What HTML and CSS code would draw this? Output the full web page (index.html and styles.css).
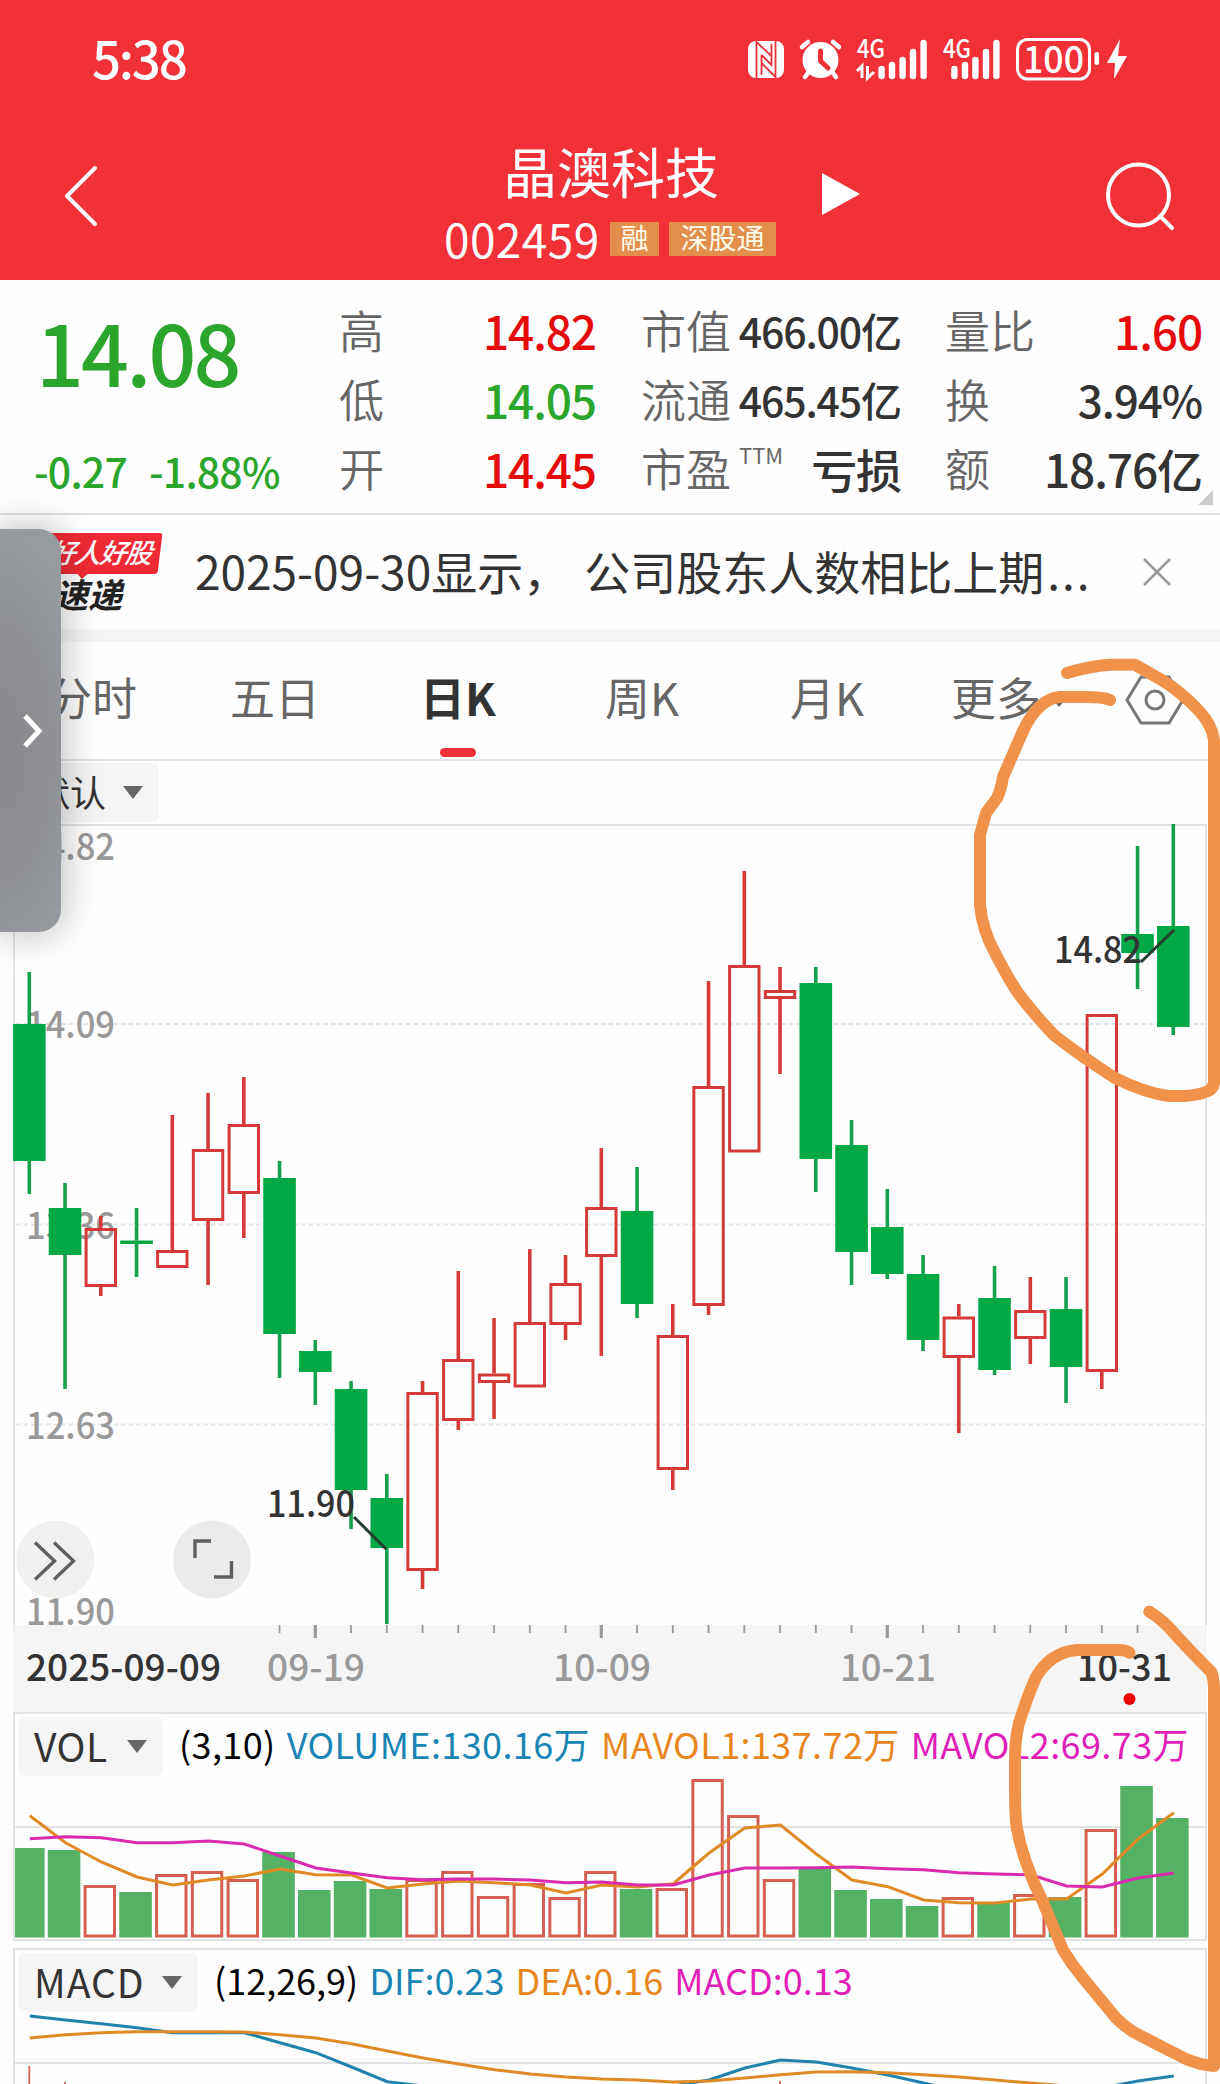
FILE: index.html
```html
<!DOCTYPE html>
<html lang="zh-CN">
<head>
    <meta charset="UTF-8">
    <meta name="viewport" content="width=device-width, initial-scale=1.0">
    <title>晶澳科技 002459</title>
    <link rel="stylesheet" href="styles.css">
</head>
<body>
    <header class="top">
        <div class="status-bar">
            <span class="clock">5:38</span>
            <svg class="status-icons" width="382" height="68" viewBox="747 20 382 68">
                <rect x="748" y="41" width="36" height="37" rx="8" fill="#fff"/>
                <path d="M757.500 76V43L771 56V64L761 54V76Z" fill="#fff"/>
                <path d="M756.500 78V42L771.500 56M775.500 41V77L761.500 63M761.500 55L771.500 65V44M761.500 55V75" fill="none" stroke="#f23038" stroke-width="1.8"/>
                <circle cx="820.500" cy="60" r="18" fill="#fff"/>
                <path d="M802 47L808 42M839 47L833 42M808 73L805 77M833 73L836 77" stroke="#fff" stroke-width="4.500" stroke-linecap="round"/>
                <path d="M820.500 51V61L828 68" fill="none" stroke="#f23038" stroke-width="5" stroke-linecap="round" stroke-linejoin="round"/>
                <text x="857" y="58" class="net" textLength="28" lengthAdjust="spacingAndGlyphs">4G</text>
                <path d="M857 71L862 66V78M867.500 66V78L874 72" fill="none" stroke="#fff" stroke-width="3"/>
                <path d="M881.600 69V76M892 65V76M902.600 60V76M913 52V76M923.600 43V76" class="bars"/>
                <text x="943" y="58" class="net" textLength="28" lengthAdjust="spacingAndGlyphs">4G</text>
                <path d="M954.400 69V76M965 65V76M975.400 60V76M986 52V76M996.400 43V76" class="bars"/>
                <rect x="1017.500" y="39.500" width="72" height="39.500" rx="10" fill="none" stroke="#fff" stroke-width="3"/>
                <text x="1023" y="73" class="battery" textLength="61" lengthAdjust="spacingAndGlyphs">100</text>
                <rect x="1094.500" y="52" width="4.500" height="13" rx="2" fill="#fff"/>
                <path d="M1120 39L1107 63H1115L1114 79L1127 56H1118Z" fill="#fff"/>
            </svg>
        </div>
        <div class="title-bar">
            <svg class="back" width="36" height="64" viewBox="0 0 36 64"><path d="M32 4L4 32L32 60"/></svg>
            <div class="stock">
                <h1>晶澳科技</h1>
                <div class="code-row">
                    <span class="code">002459</span>
                    <span class="badge">融</span>
                    <span class="badge wide">深股通</span>
                </div>
            </div>
            <svg class="play" width="38" height="42" viewBox="0 0 38 42"><path d="M0 0L38 21L0 42Z"/></svg>
            <svg class="search" width="70" height="70" viewBox="0 0 70 70"><circle cx="33.500" cy="34" r="30.500"/><path d="M55 55L67 67"/></svg>
        </div>
    </header>

    <section class="quote">
        <div class="price">
            <div class="last">14.08</div>
            <div class="change"><span>-0.27</span><span>-1.88%</span></div>
        </div>
        <dl class="col">
            <div><dt>高</dt><dd class="up">14.82</dd></div>
            <div><dt>低</dt><dd class="down">14.05</dd></div>
            <div><dt>开</dt><dd class="up">14.45</dd></div>
        </dl>
        <dl class="col cap">
            <div><dt>市值</dt><dd>466.00亿</dd></div>
            <div><dt>流通</dt><dd>465.45亿</dd></div>
            <div><dt>市盈<sup>TTM</sup></dt><dd class="loss">亏损</dd></div>
        </dl>
        <dl class="col">
            <div><dt>量比</dt><dd class="up">1.60</dd></div>
            <div><dt>换</dt><dd class="turnover">3.94%</dd></div>
            <div><dt>额</dt><dd>18.76亿</dd></div>
        </dl>
        <i class="corner"></i>
    </section>

    <section class="news">
        <div class="news-logo">
            <span class="logo-top">好人好股</span>
            <span class="logo-bottom">速递</span>
        </div>
        <p>2025-09-30显示，<span>公司股东人数相比上期</span><span class="dots">...</span></p>
        <svg class="close" width="30" height="30" viewBox="0 0 30 30"><path d="M2 2L28 28M28 2L2 28"/></svg>
    </section>

    <nav class="tabs">
        <span>分时</span>
        <span>五日</span>
        <span class="active">日K</span>
        <span>周K</span>
        <span>月K</span>
        <span class="more">更多<i></i></span>
        <svg class="gear" width="60" height="54" viewBox="0 0 60 54"><path d="M2 27L16 4H44L58 27L44 50H16Z"/><circle cx="30" cy="27" r="9"/></svg>
    </nav>

    <div class="overlay-row">
        <span class="select">默认<i class="arrow"></i></span>
    </div>

    <svg class="price-chart" id="priceChart" width="1220" height="888" viewBox="0 824 1220 888"></svg>

    <section class="panel vol">
        <div class="indicator">
            <span class="select">VOL<i class="arrow"></i></span>
            <span class="params">(3,10)</span>
            <span class="blue">VOLUME:130.16万</span>
            <span class="orange">MAVOL1:137.72万</span>
            <span class="pink">MAVOL2:69.73万</span>
        </div>
        <svg id="volChart" width="1190" height="164" viewBox="15 1776 1190 164"></svg>
    </section>

    <section class="panel macd">
        <div class="indicator">
            <span class="select">MACD<i class="arrow"></i></span>
            <span class="params">(12,26,9)</span>
            <span class="blue">DIF:0.23</span>
            <span class="orange">DEA:0.16</span>
            <span class="pink">MACD:0.13</span>
        </div>
        <svg id="macdChart" width="1190" height="72" viewBox="15 2012 1190 72"></svg>
    </section>

    <aside class="drawer">
        <svg width="20" height="36" viewBox="0 0 20 36"><path d="M2 3L16 18L2 33"/></svg>
    </aside>

    <!-- hand drawn marks on top of everything -->
    <svg class="marks" width="1220" height="2084" viewBox="0 0 1220 2084">
        <path d="M1067 673Q1090 666 1110 664.700H1135L1160 679Q1182 692 1200 712Q1212 725 1214 740V1083Q1213 1089 1208 1091Q1200 1095 1185 1096H1169Q1145 1093 1115 1078Q1085 1059 1055 1036Q1038 1019 1018 993Q1008 978 995 953Q982 929 980 905V835L986 813L997 798Q1001 790 1003 777L1023 731Q1038 699 1060 697H1085Q1104 697 1110 700"/>
        <path d="M1149.300 1611.700Q1163 1620 1174 1633Q1190 1651 1211 1671.700Q1214 1678 1214 1690V2066Q1200 2065 1186 2059Q1160 2046 1133 2031.700Q1124 2026 1116 2018L1083 1978Q1072 1965 1063 1950Q1054 1928 1042 1900Q1023 1862 1016.600 1827Q1015 1815 1015 1790V1757Q1015 1740 1019 1723Q1028 1695 1036 1677Q1051 1652 1077 1650H1118Q1126 1650 1129.500 1652.700"/>
    </svg>

    <script>
        const STEP = 35.75, FIRST = 29.3;
        const GREEN = '#02a846', RED = '#d33a38';

        // [up, high, body top, body bottom, low]
        const candles = [
            [0, 972, 1024, 1161, 1194], [0, 1183, 1208, 1255, 1389], [1, 1216, 1228, 1287, 1296],
            [0, 1208, 1240.5, 1244, 1277], [1, 1115, 1250, 1268, 1268], [1, 1093, 1149, 1221, 1285],
            [1, 1077, 1124, 1194, 1238], [0, 1161, 1178, 1334, 1378], [0, 1340, 1351, 1372, 1405],
            [0, 1381, 1389, 1490, 1529], [0, 1474, 1498, 1548, 1624], [1, 1381, 1392, 1571, 1589],
            [1, 1271, 1359, 1421, 1430], [1, 1318, 1373.5, 1383, 1419], [1, 1249, 1322, 1387.5, 1387],
            [1, 1255, 1283, 1325, 1340], [1, 1148, 1207, 1257, 1356], [0, 1167, 1211, 1304, 1318],
            [1, 1304, 1335, 1470, 1490], [1, 981, 1086, 1306, 1315], [1, 871, 965, 1152.5, 1152],
            [1, 967, 990, 999, 1074], [0, 967, 983, 1159, 1192], [0, 1120, 1145, 1252, 1285],
            [0, 1189, 1227, 1274, 1279], [0, 1255, 1274, 1340, 1351], [1, 1304, 1316.5, 1358, 1433],
            [0, 1266, 1298, 1370, 1375], [1, 1277, 1310, 1339, 1364], [0, 1277, 1309, 1367, 1403],
            [1, 1015, 1014, 1372, 1389], [0, 846, 934, 953, 989], [0, 824, 926, 1027, 1035]
        ];
        const volTop = [1848, 1850, 1885, 1892, 1874, 1871, 1879, 1852, 1890, 1881, 1889, 1879, 1871, 1896, 1883,
            1897, 1871, 1889, 1888, 1779, 1815, 1879, 1869, 1890, 1899, 1906, 1897, 1903, 1894, 1897, 1829, 1786, 1818];
        const mavol1 = [1815.7, 1842.7, 1862, 1877, 1885, 1880, 1876, 1869, 1874.7, 1875, 1888, 1884, 1881, 1882.7, 1885,
            1893, 1885, 1887, 1883.7, 1853, 1828, 1825, 1854, 1880, 1886.7, 1900, 1902.7, 1903, 1899, 1899, 1874, 1839, 1812.7];
        const mavol2 = [1838.7, 1836.7, 1837.7, 1842.7, 1842.7, 1841, 1844, 1856, 1868, 1873, 1877.7, 1879.7, 1879, 1879, 1880,
            1882.7, 1882, 1885, 1885, 1875, 1868, 1868, 1867.7, 1867, 1868.7, 1869.7, 1872.7, 1874, 1874.7, 1886, 1887, 1878, 1873];
        const dif = [2016, 2020, 2023.7, 2027.7, 2032.7, 2032.7, 2032.7, 2042.7, 2052.7, 2067, 2081.7, 2086, 2094, 2098, 2098,
            2098, 2096, 2092, 2086, 2080, 2068, 2060, 2062, 2068, 2075, 2083, 2091, 2094, 2096, 2094, 2088, 2081, 2076];
        const dea = [2038, 2034.7, 2032.7, 2031.7, 2031.7, 2031.7, 2032, 2034.7, 2038, 2043.7, 2051, 2058, 2064, 2069.7, 2074,
            2077, 2079, 2080, 2082, 2081, 2078, 2074.7, 2072, 2071.7, 2072.7, 2074.7, 2077, 2080, 2083, 2086, 2088, 2089, 2090];

        const cx = i => FIRST + i * STEP;

        function line(x1, y1, x2, y2, color, width, extra = '') {
            return `<path d="M${x1} ${y1}L${x2} ${y2}" stroke="${color}" stroke-width="${width}" ${extra}/>`;
        }

        function series(data, color) {
            const points = data.map((y, i) => `${cx(i) + 0.5},${y}`).join(' ');
            return `<polyline points="${points}" fill="none" stroke="${color}" stroke-width="3"/>`;
        }

        function label(text, x, baseline, width, cls) {
            return `<text x="${x}" y="${baseline}" class="${cls}" textLength="${width}" lengthAdjust="spacingAndGlyphs">${text}</text>`;
        }

        function drawPrice() {
            let s = '<rect x="13" y="1625" width="1194" height="87" fill="#f5f5f5"/>';
            s += '<path d="M14 1625V825H1206V1625" fill="none" stroke="#e3e3e3" stroke-width="2"/>';
            [1024, 1224.5, 1424.5].forEach(y => s += line(16, y, 1204, y, '#e3e3e3', 2, 'stroke-dasharray="4.500 3"'));
            [['14.82', 860], ['14.09', 1038], ['13.36', 1239], ['12.63', 1439], ['11.90', 1625]]
                .forEach(([t, y]) => s += label(t, 26, y, 89, 'axis'));

            candles.forEach(([up, high, top, bottom, low], i) => {
                const x = cx(i), color = up ? RED : GREEN, wick = up ? RED : '#14a04d';
                if (high < top) s += line(x, high, x, top, wick, 3.6);
                if (low > bottom) s += line(x, bottom, x, low, wick, 3.6);
                if (up) {
                    s += `<rect x="${x - 14.7}" y="${top + 1.5}" width="29.4" height="${bottom - top - 3}" fill="none" stroke="${RED}" stroke-width="3"/>`;
                } else {
                    s += `<rect x="${x - 16.3}" y="${top}" width="32.600" height="${bottom - top}" fill="${color}"/>`;
                }
            });

            s += label('11.90', 267, 1517, 88, 'note') + line(354, 1517, 386, 1549, '#263d30', 3);
            s += label('14.82', 1054, 963, 88, 'note') + line(1141, 962, 1174, 930, '#263d30', 3);

            // round chart buttons
            s += '<circle cx="55.300" cy="1559.500" r="39" fill="#f0f0ee"/><circle cx="212" cy="1559.500" r="39" fill="#ebebeb"/>';
            s += '<path d="M35 1542.500L54.500 1561L35 1579.500M54 1542.500L73.500 1561L54 1579.500M195 1558V1541H211M214 1577H231.500V1561" class="tool"/>';

            for (let i = 7; i < 32; i++) {
                const major = i % 8 === 0;
                s += line(cx(i), 1625, cx(i), major ? 1638 : 1633, '#999', major ? 3.2 : 1.8);
            }
            s += label('2025-09-09', 26, 1681, 195, 'date dark');
            s += label('09-19', 267, 1681, 98, 'date');
            s += label('10-09', 553, 1681, 98, 'date');
            s += label('10-21', 840, 1681, 96, 'date');
            s += label('10-31', 1077, 1681, 95, 'date dark');
            s += '<circle cx="1129.500" cy="1699" r="6" fill="#f00000"/>';
            document.getElementById('priceChart').innerHTML = s;
        }

        function drawVolume() {
            let s = line(15, 1827, 1205, 1827, '#e3e3e3', 2);
            volTop.forEach((y, i) => {
                const x = cx(i) - 1;
                if (candles[i][0]) {
                    s += `<rect x="${x - 14.7}" y="${y + 1.5}" width="29.4" height="${1937.5 - y - 3}" fill="none" stroke="#d45f52" stroke-width="3"/>`;
                } else {
                    s += `<rect x="${x - 16.3}" y="${y}" width="32.600" height="${1937.5 - y}" fill="#55b164"/>`;
                }
            });
            s += series(mavol1, '#e08a26') + series(mavol2, '#d92bb0');
            document.getElementById('volChart').innerHTML = s;
        }

        function drawMacd() {
            let s = line(15, 2063, 1205, 2063, '#e3e3e3', 2);
            s += line(cx(0), 2066, cx(0), 2084, '#d45f52', 1.8);
            s += line(cx(1), 2082, cx(1), 2084, '#d45f52', 1.8);
            s += line(cx(21), 2081, cx(21), 2084, '#d45f52', 1.8);
            s += series(dif, '#1f83ad') + series(dea, '#e08a26');
            document.getElementById('macdChart').innerHTML = s;
        }

        drawPrice();
        drawVolume();
        drawMacd();
    </script>
</body>
</html>
```
FILE: styles.css
```css
* {
    box-sizing: border-box;
}
body {
    position: relative;
    width: 1220px;
    height: 2084px;
    margin: 0;
    overflow: hidden;
    background: #fefefe;
    color: #333;
    font-family: "Noto Sans CJK SC", "Noto Sans", sans-serif;
}
h1, p, dl, dd {
    margin: 0;
}
svg {
    display: block;
}

/* header */
.top {
    height: 280px;
    background: #f23038;
    color: white;
}
.status-bar {
    display: flex;
    justify-content: space-between;
    height: 112px;
    padding: 20px 91px 0 92px;
}
.clock {
    margin-top: 11px;
    font-size: 51px;
    line-height: 52px;
    font-weight: 500;
    letter-spacing: -2.2px;
}
.net {
    fill: white;
    font-size: 25px;
    font-weight: 500;
}
.battery {
    fill: white;
    font-size: 37px;
    font-weight: 500;
}
.bars {
    stroke: white;
    stroke-width: 6.4;
    stroke-linecap: round;
}
.title-bar {
    display: grid;
    grid-template-columns: 430px 362px 313px 1fr;
    height: 168px;
}
.title-bar svg {
    fill: none;
    stroke: white;
    stroke-width: 4;
    stroke-linecap: round;
    stroke-linejoin: round;
}
.title-bar .back {
    margin: 52px 0 0 63px;
}
.title-bar .play {
    margin: 61px 0 0 30px;
    fill: white;
    stroke: none;
}
.title-bar .search {
    margin-top: 49px;
}
.stock {
    padding-top: 29px;
}
h1 {
    font-size: 54px;
    line-height: 60px;
    font-weight: 400;
    text-align: center;
}
.code-row {
    display: flex;
    align-items: center;
    height: 34px;
    margin: 21px 0 0 14px;
}
.code {
    width: 166px;
    margin-top: -3px;
    font-size: 46px;
    line-height: 46px;
    letter-spacing: 0.4px;
}
.badge {
    width: 49px;
    height: 34px;
    margin-right: 10px;
    background: #e38e4b;
    color: #fffbe8;
    font-size: 28px;
    line-height: 31px;
    text-align: center;
}
.badge.wide {
    width: 107px;
    margin-right: 0;
}

/* quote */
.quote {
    position: relative;
    display: grid;
    grid-template-columns: 340px 256px 259px 256px;
    column-gap: 0;
    height: 235px;
    padding-top: 17px;
    border-bottom: 2px solid #e0e0e0;
}
.price {
    color: #2ba52b;
    font-weight: 500;
}
.last {
    margin: 9px 0 0 36px;
    font-size: 84px;
    line-height: 90px;
    letter-spacing: -2.8px;
}
.change {
    display: flex;
    gap: 22px;
    margin: 46px 0 0 34px;
    font-size: 41px;
    line-height: 56px;
    letter-spacing: -0.8px;
}
.col div {
    display: flex;
    justify-content: space-between;
    height: 69px;
    line-height: 66px;
}
.col.cap {
    margin: 0 -46px 0 46px;
}
.col.cap + .col {
    margin: 0 -91px 0 91px;
}
dt {
    margin-left: -1px;
    color: #666;
    font-size: 45px;
    font-weight: 350;
    white-space: nowrap;
}
dd {
    font-size: 46px;
    font-weight: 500;
    letter-spacing: -1.1px;
    white-space: nowrap;
}
.cap dd {
    font-size: 41px;
    letter-spacing: -1.1px;
}
.cap .loss {
    font-size: 46px;
}
.turnover {
    font-size: 44px;
}
sup {
    margin-left: 8px;
    font-size: 22px;
    line-height: 0;
    font-weight: 400;
    vertical-align: 23px;
}
.up {
    color: #e60a0a;
}
.down {
    color: #2ba52b;
}
.corner {
    position: absolute;
    right: 7px;
    bottom: 8px;
    border-left: 15px solid transparent;
    border-bottom: 15px solid #ccc;
}

/* news */
.news {
    display: flex;
    align-items: center;
    height: 127px;
    border-bottom: 13px solid #f5f5f5;
}
.news-logo {
    width: 195px;
    height: 78px;
}
.logo-top {
    position: relative;
    display: block;
    width: 160px;
    height: 41px;
    padding-right: 9px;
    border-radius: 3px;
    background: #f02a35;
    color: white;
    font-size: 27px;
    line-height: 37px;
    font-weight: 500;
    font-style: italic;
    letter-spacing: -1.500px;
    text-align: right;
    transform: skewX(-7deg);
}
.logo-top::after {
    content: "";
    position: absolute;
    left: 79px;
    top: 40px;
    border: 6px solid transparent;
    border-top-color: #f02a35;
    border-bottom: 0;
}
.logo-bottom {
    display: block;
    padding-left: 54px;
    color: #222;
    font-size: 34px;
    line-height: 40px;
    font-weight: 700;
    font-style: italic;
}
.news p {
    width: 947px;
    margin-top: -4px;
    font-size: 46px;
    line-height: 60px;
    white-space: nowrap;
}
.news p span {
    margin-left: 15px;
}
.news p .dots {
    margin-left: 3px;
    letter-spacing: 2px;
}
.close {
    fill: none;
    stroke: #999;
    stroke-width: 2.6;
}

/* tabs */
.tabs {
    display: grid;
    grid-template-columns: 183px 190px 185px 185px 161px 174px 1fr;
    height: 119px;
    padding-left: 47px;
    border-bottom: 2px solid #e3e3e3;
    color: #666;
    font-size: 45px;
    line-height: 110px;
}
.tabs .active {
    position: relative;
    color: #333;
    font-weight: 700;
}
.tabs .active::after {
    content: "";
    position: absolute;
    left: 20px;
    bottom: 2px;
    width: 36px;
    height: 9px;
    border-radius: 5px;
    background: #f23038;
}
.more i {
    display: inline-block;
    margin-left: 12px;
    border: 6px solid transparent;
    border-top: 7px solid #666;
    border-bottom: 0;
    vertical-align: 9px;
}
.gear {
    margin-top: 31px;
    fill: none;
    stroke: #777;
    stroke-width: 3;
}

/* selects */
.overlay-row {
    height: 63px;
    padding: 2px 0 0 18px;
}
.select {
    display: flex;
    align-items: center;
    justify-content: space-between;
    width: 141px;
    height: 59px;
    padding: 0 16px 3px;
    border-radius: 6px;
    background: #f5f5f5;
    color: #333;
    font-size: 36px;
    line-height: 50px;
}
.arrow {
    margin-top: 2px;
    border: 10px solid transparent;
    border-top: 13px solid #666;
    border-bottom: 0;
}

/* charts */
.price-chart {
    overflow: visible;
}
.axis, .note, .date {
    font-size: 37px;
    font-weight: 500;
    fill: #999;
}
.note, .dark {
    fill: #333;
}
.tool {
    fill: none;
    stroke: #606060;
    stroke-width: 3.4;
}
.panel {
    margin: 0 13px;
    border: 2px solid #e3e3e3;
}
.vol {
    height: 229px;
    margin-bottom: 7px;
}
.macd {
    height: 140px;
}
.indicator {
    display: flex;
    height: 62px;
    padding: 3px 0 0 3px;
    font-size: 36px;
    line-height: 52px;
    letter-spacing: 0.4px;
    white-space: nowrap;
}
.indicator .select {
    width: 145px;
    margin-right: 16px;
    font-size: 39px;
    letter-spacing: 0.5px;
}
.macd .indicator {
    letter-spacing: 0;
}
.macd .select {
    width: 180px;
    letter-spacing: 1px;
}
.indicator span + span {
    margin-right: 11px;
}
.params {
    color: black;
}
.blue {
    color: #1a85b5;
}
.orange {
    color: #e8861e;
}
.pink {
    color: #e01fb8;
}

/* floating layers */
.drawer {
    position: absolute;
    left: 0;
    top: 529px;
    display: flex;
    align-items: center;
    width: 61px;
    height: 403px;
    padding-left: 23px;
    border-radius: 0 22px 22px 0;
    background: radial-gradient(ellipse 90px 220px at 0 55%, #8a878b, #8f9195 60%, #969b9f);
    box-shadow: 0 0 42px rgba(0, 0, 0, 0.3);
}
.drawer path {
    fill: none;
    stroke: white;
    stroke-width: 5;
}
.marks {
    position: absolute;
    left: 0;
    top: 0;
    fill: none;
    stroke: #f0924a;
    stroke-width: 12;
    stroke-linecap: round;
    stroke-linejoin: round;
}
```
